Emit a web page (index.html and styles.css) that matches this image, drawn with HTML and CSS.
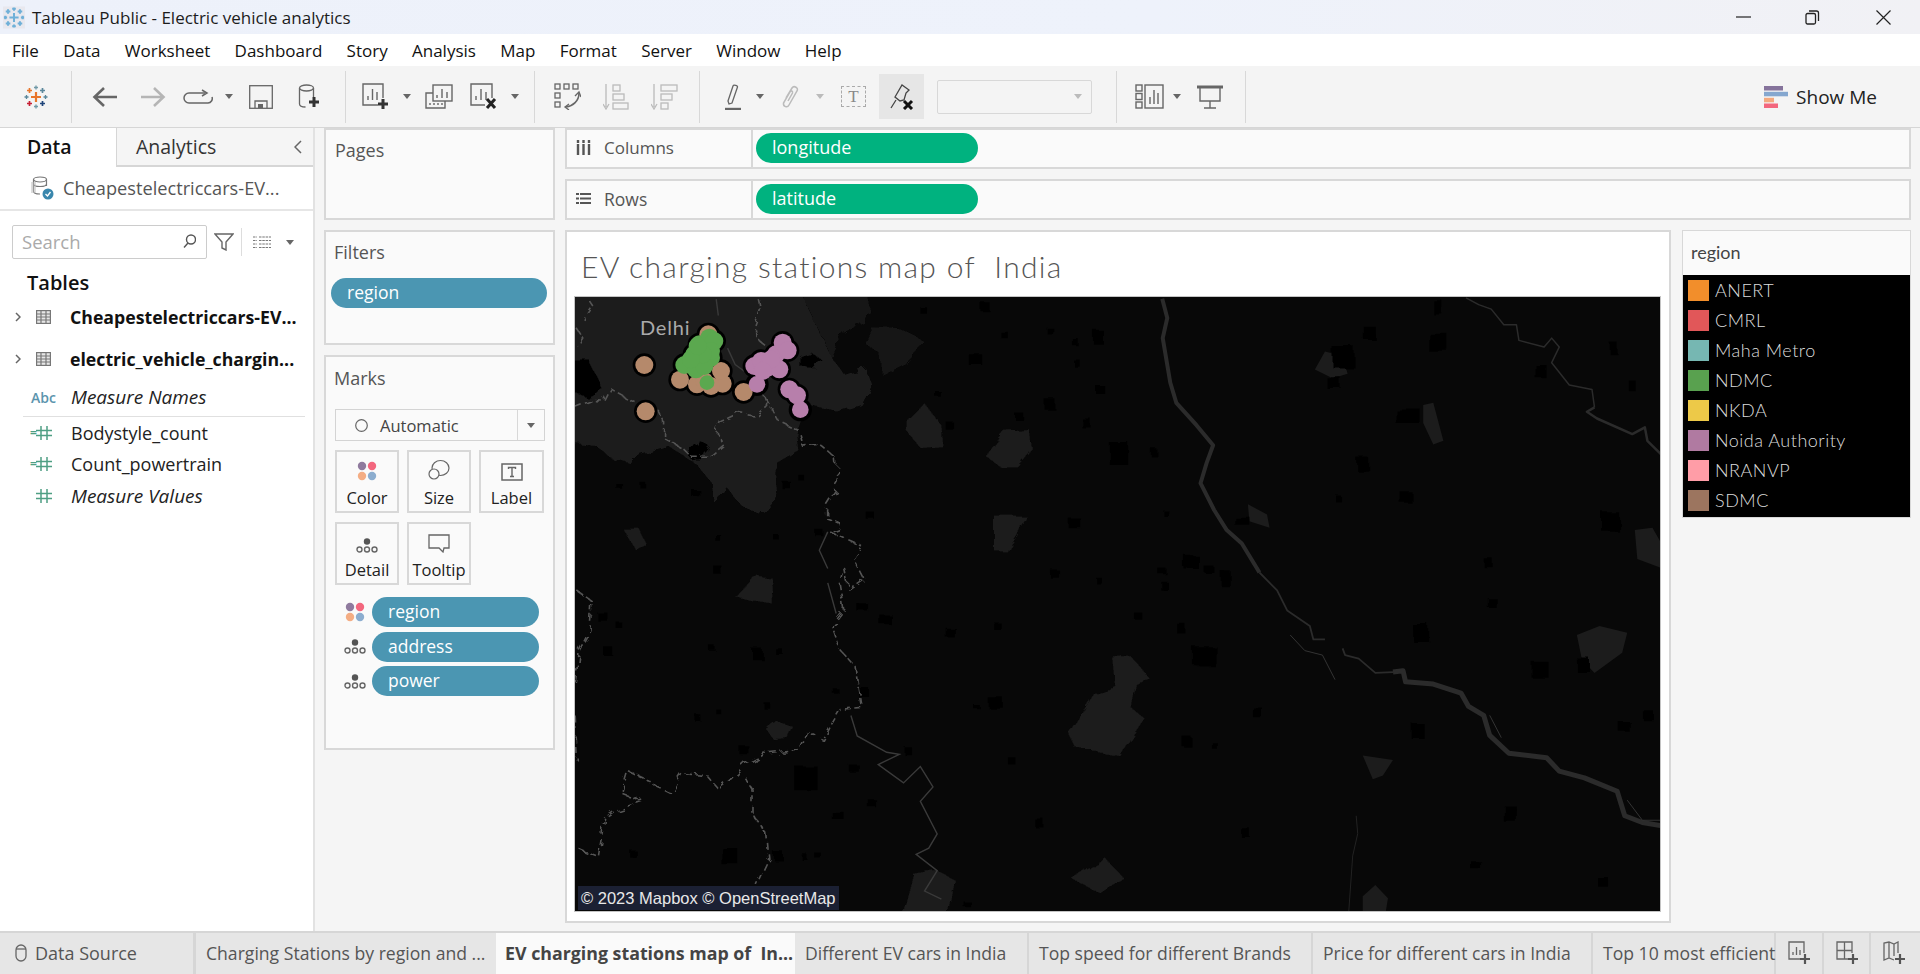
FILE: index.html
```html
<!DOCTYPE html>
<html lang="en">
<head>
<meta charset="utf-8">
<title>Tableau Public - Electric vehicle analytics</title>
<link rel="stylesheet" href="styles.css">
</head>
<body>
<svg class="defs" width="0" height="0" aria-hidden="true">
  <defs>
    <g id="tlogo" fill="none" stroke-width="1.7">
      <path stroke="#e8762b" stroke-width="2.2" d="M12 7v10M7 12h10"/>
      <path stroke="#e8762b" d="M5.5 3v5M3 5.5h5"/>
      <path stroke="#5b879b" d="M18.5 3v5M16 5.5h5"/>
      <path stroke="#c72035" d="M5.5 16v5M3 18.5h5"/>
      <path stroke="#1f447a" d="M18.5 16v5M16 18.5h5"/>
      <path stroke="#7099a6" stroke-width="1.3" d="M12 .5v4M10 2.5h4"/>
      <path stroke="#7099a6" stroke-width="1.3" d="M12 19.5v4M10 21.5h4"/>
      <path stroke="#59879b" stroke-width="1.3" d="M2.5 10v4M.5 12h4"/>
      <path stroke="#59879b" stroke-width="1.3" d="M21.5 10v4M19.5 12h4"/>
    </g>
    <g id="ddots" fill="none" stroke="#666" stroke-width="1.4">
      <circle cx="11" cy="3.5" r="3.2" fill="#555" stroke="none"/>
      <circle cx="3.5" cy="11.5" r="2.5"/><circle cx="11" cy="11.5" r="2.5"/><circle cx="18.5" cy="11.5" r="2.5"/>
    </g>
    <g id="cdots">
      <circle cx="5" cy="5" r="4.2" fill="#8f7a9e"/><circle cx="15" cy="5" r="4.2" fill="#f3677e"/>
      <circle cx="5" cy="15" r="4.2" fill="#f4ad84"/><circle cx="15" cy="15" r="4.2" fill="#8cadcf"/>
    </g>
    <g id="tblg" fill="none" stroke="#777" stroke-width="1.2">
      <rect x=".6" y=".6" width="13.8" height="12.8" fill="#e6e6e6"/>
      <path d="M.6 4h13.8M.6 7h13.8M.6 10h13.8M5 1v12M10 1v12"/>
    </g>
    <g id="hash" fill="none" stroke="#4f9f84" stroke-width="1.5">
      <path d="M5 1v14M11 1v14M0 5.5h16M0 10.5h16"/>
    </g>
    <filter id="wob" x="-2%" y="-2%" width="104%" height="104%"><feTurbulence type="fractalNoise" baseFrequency=".018" numOctaves="2" seed="4"/><feDisplacementMap in="SourceGraphic" scale="22"/></filter>
    <filter id="wig" x="-2%" y="-2%" width="104%" height="104%"><feTurbulence type="fractalNoise" baseFrequency=".035" numOctaves="2" seed="9"/><feDisplacementMap in="SourceGraphic" scale="24"/></filter>
  </defs>
</svg>

<header class="titlebar">
  <svg class="title-logo" width="22" height="23" viewBox="0 0 24 24"><rect width="24" height="24" fill="#e8e8ee"/><g fill="none" stroke="#6fb0d8" stroke-width="1.8"><path stroke-width="2.2" d="M12 7v10M7 12h10M5.5 3v5M3 5.5h5M18.5 3v5M16 5.5h5M5.5 16v5M3 18.5h5M18.5 16v5M16 18.5h5M12 1v3.5M10 2.5h4M12 19.5v3.5M10 21.5h4M2.5 10v4M1 12h3.5M21.5 10v4M19.5 12h3.500"/></g></svg>
  <span class="title-text">Tableau Public - Electric vehicle analytics</span>
  <div class="winctl">
    <svg class="w-min" width="15" height="2" viewBox="0 0 15 2"><path d="M0 1h15" stroke="#222" stroke-width="1.2"/></svg>
    <svg class="w-max" width="15" height="15" viewBox="0 0 15 15" fill="none" stroke="#222" stroke-width="1.3"><rect x="1" y="3.500" width="9.500" height="10.500" rx="1.500"/><path d="M4 1h7.500a2 2 0 0 1 2 2v8"/></svg>
    <svg class="w-close" width="15" height="15" viewBox="0 0 15 15" stroke="#222" stroke-width="1.200"><path d="M.5.5l14 14M14.500.5l-14 14"/></svg>
  </div>
</header>

<nav class="menubar">
  <span>File</span><span>Data</span><span>Worksheet</span><span>Dashboard</span><span>Story</span><span>Analysis</span><span>Map</span><span>Format</span><span>Server</span><span>Window</span><span>Help</span>
</nav>

<div class="toolbar">
  <svg class="t-logo" width="24" height="24" viewBox="0 0 24 24"><use href="#tlogo"/></svg>
  <i class="sep s1"></i>
  <svg class="t-back" width="26" height="22" viewBox="0 0 26 22" fill="none" stroke="#666" stroke-width="2.600"><path d="M25 11H3M12 2l-9.500 9 9.500 9"/></svg>
  <svg class="t-fwd" width="26" height="22" viewBox="0 0 26 22" fill="none" stroke="#b5b5b5" stroke-width="2.600"><path d="M1 11h22M14 2l9.500 9-9.500 9"/></svg>
  <svg class="t-loop" width="30" height="16" viewBox="0 0 30 16" fill="none" stroke="#666" stroke-width="1.500"><path d="M22 4H6a4.500 4.500 0 0 0 0 10h19a4.500 4.500 0 0 0 4-6"/><path d="M19 1l5 3-5 3"/></svg>
  <i class="caret c1"></i>
  <svg class="t-save" width="24" height="24" viewBox="0 0 24 24" fill="none" stroke="#666" stroke-width="1.300"><rect x=".7" y=".7" width="22.600" height="22.600"/><path d="M6 23v-7h12v7"/><rect x="9" y="19" width="5" height="4" fill="#666" stroke="none"/></svg>
  <svg class="t-ds" width="22" height="25" viewBox="0 0 22 25" fill="none" stroke="#666" stroke-width="1.300"><ellipse cx="8.500" cy="4" rx="7" ry="3"/><path d="M1.500 4v16c0 2 3 3 6 3M15.500 4v9"/><path stroke="#333" stroke-width="3" d="M16 13v10M11 18h10"/></svg>
  <i class="sep s2"></i>
  <svg class="t-new" width="27" height="27" viewBox="0 0 27 27" fill="none" stroke="#666" stroke-width="1.400"><path d="M16 22H1V1h20v14"/><path d="M6 17v-4M10.500 17V6M15 17V9"/><path stroke="#333" stroke-width="3" d="M21 16v10M16 21h10"/></svg>
  <i class="caret c2"></i>
  <svg class="t-dup" width="28" height="25" viewBox="0 0 28 25" fill="none" stroke="#666" stroke-width="1.400"><rect x="8" y="1" width="19" height="16"/><path d="M12 14v-3M17 14V5M22 14V8"/><path d="M8 9H1v15h19v-7"/><path d="M5 21v-2M9 21v-2M13 21v-2M17 21v-2"/></svg>
  <svg class="t-clear" width="27" height="27" viewBox="0 0 27 27" fill="none" stroke="#666" stroke-width="1.400"><path d="M15 22H1V1h21v14"/><path d="M6 17v-4M11 17V6M16 17V9"/><path stroke="#222" stroke-width="3" d="M17 16l8 9M25 16l-8 9"/></svg>
  <i class="caret c3"></i>
  <i class="sep s3"></i>
  <svg class="t-swap" width="27" height="27" viewBox="0 0 27 27" fill="none" stroke="#666" stroke-width="1.300"><rect x="1" y="1" width="5" height="5"/><rect x="10" y="1" width="5" height="5"/><rect x="19" y="1" width="5" height="5"/><rect x="1" y="10" width="5" height="5"/><rect x="1" y="19" width="5" height="5"/><path stroke-width="1.600" d="M25 10c0 8-6 13-13 14"/><path d="M21 13l4-4 2 5M15 21l-4 3 4 3"/></svg>
  <svg class="t-sorta" width="26" height="27" viewBox="0 0 26 27" fill="none" stroke="#bbb" stroke-width="1.300"><path d="M3 1v23M0 21l3 5 3-5"/><rect x="10" y="2" width="7" height="6"/><rect x="10" y="11" width="11" height="6"/><rect x="10" y="20" width="15" height="6"/></svg>
  <svg class="t-sortd" width="27" height="27" viewBox="0 0 27 27" fill="none" stroke="#bbb" stroke-width="1.300"><path d="M3 1v23M0 21l3 5 3-5"/><rect x="10" y="2" width="16" height="6"/><rect x="10" y="11" width="11" height="6"/><rect x="10" y="20" width="7" height="6"/></svg>
  <i class="sep s4"></i>
  <svg class="t-hl" width="16" height="26" viewBox="0 0 16 26" fill="none" stroke="#666" stroke-width="1.300"><path d="M3 17L8 2c.5-1.500 5-.5 4.500 1L7 19l-3 1z"/><path stroke-width="2.400" d="M0 25h16"/></svg>
  <i class="caret c5"></i>
  <svg class="t-clip" width="18" height="26" viewBox="0 0 18 26" fill="none" stroke="#bbb" stroke-width="1.500"><path d="M4 14L10 4c2-3 7 0 5 3L7 21c-1.500 3-6 2-5.500-2L8 8c1-2 3-1 2.500 1L6 17"/></svg>
  <i class="caret light c6"></i>
  <span class="t-text">T</span>
  <span class="pinbtn"><svg width="25" height="27" viewBox="0 0 25 27" fill="none" stroke="#444" stroke-width="1.300"><path d="M6 14L13 2l7 5-3 3-2 7-4 1-5-4zM7 17L2 25"/><path stroke="#111" stroke-width="3" d="M15 18l8 8M23 18l-8 8"/></svg></span>
  <span class="combo"><i class="caret light"></i></span>
  <i class="sep s5"></i>
  <svg class="t-lab" width="29" height="25" viewBox="0 0 29 25" fill="none" stroke="#666" stroke-width="1.400"><rect x="1" y="1" width="6" height="6"/><rect x="1" y="9.500" width="6" height="6"/><rect x="1" y="18" width="6" height="6"/><rect x="10" y="1" width="18" height="23"/><path d="M15 20v-7M19 20V6M23 20V9"/></svg>
  <i class="caret c7"></i>
  <svg class="t-pres" width="26" height="25" viewBox="0 0 26 25" fill="none" stroke="#666" stroke-width="1.400"><path stroke-width="3" d="M0 3h26"/><path d="M3 4v13h20V4M13 17v7M7 24h12"/></svg>
  <i class="sep s6"></i>
  <div class="showme">
    <svg width="24" height="22" viewBox="0 0 24 22"><rect width="19" height="4.500" fill="#85739b"/><rect y="5.800" width="24" height="4.500" fill="#85a7cf"/><rect y="11.800" width="10" height="4.500" fill="#f4a97f"/><rect y="17.500" width="14" height="4.500" fill="#f3677e"/></svg>
    <span>Show Me</span>
  </div>
</div>

<main class="main">
  <aside class="leftpane">
    <div class="ltabs">
      <span class="ltab active">Data</span>
      <span class="ltab">Analytics<svg class="collapse" width="8" height="14" viewBox="0 0 8 14" fill="none" stroke="#666" stroke-width="1.500"><path d="M7 1L1 7l6 6"/></svg></span>
    </div>
    <div class="dsrow">
      <svg width="24" height="24" viewBox="0 0 24 24" fill="none" stroke="#777" stroke-width="1.200"><ellipse cx="10" cy="3.500" rx="6.500" ry="2.500"/><path d="M3.500 3.500v12c0 1.500 3 2.500 6.500 2.500M16.500 3.500V10M3.500 8c0 1.500 3 2.500 6.500 2.500s6.500-1 6.500-2.500"/><rect x="1" y="6" width="5" height="11" fill="#bbb" stroke="none" opacity=".5"/><circle cx="18" cy="18" r="5.500" fill="#3a87ad" stroke="none"/><path stroke="#fff" stroke-width="1.300" d="M15.500 18l2 2 3-4"/></svg>
      <span>Cheapestelectriccars-EV...</span>
    </div>
    <div class="searchrow">
      <div class="searchbox"><span>Search</span><svg width="13" height="14" viewBox="0 0 13 14" fill="none" stroke="#555" stroke-width="1.400"><circle cx="8" cy="5.500" r="4.500"/><path d="M5 9l-4 4.500"/></svg></div>
      <svg class="s-filter" width="20" height="18" viewBox="0 0 20 18" fill="none" stroke="#666" stroke-width="1.400"><path d="M1 1h18l-7 8v8l-4-2V9z"/></svg>
      <i class="vsep"></i>
      <svg class="s-list" width="18" height="13" viewBox="0 0 18 13" stroke="#777" stroke-width="1.100"><path d="M0 1h4M6 1h12M0 4.500h4M6 4.500h12M0 8h4M6 8h12M0 11.500h4M6 11.500h12" stroke-dasharray="2.500 .8"/></svg>
      <i class="caret s-caret"></i>
    </div>
    <div class="tables-h">Tables</div>
    <div class="trow first"><svg class="chev" width="6" height="10" viewBox="0 0 6 10" fill="none" stroke="#666" stroke-width="1.500"><path d="M1 1l4 4-4 4"/></svg><svg width="15" height="14" viewBox="0 0 15 14"><use href="#tblg"/></svg><b>Cheapestelectriccars-EV...</b></div>
    <div class="trow"><svg class="chev" width="6" height="10" viewBox="0 0 6 10" fill="none" stroke="#666" stroke-width="1.500"><path d="M1 1l4 4-4 4"/></svg><svg width="15" height="14" viewBox="0 0 15 14"><use href="#tblg"/></svg><b>electric_vehicle_chargin...</b></div>
    <div class="frow names"><span class="abc">Abc</span><em>Measure Names</em></div>
    <div class="frow f1"><span class="eq">=</span><svg width="16" height="16" viewBox="0 0 16 16"><use href="#hash"/></svg><span class="ftext">Bodystyle_count</span></div>
    <div class="frow f2"><span class="eq">=</span><svg width="16" height="16" viewBox="0 0 16 16"><use href="#hash"/></svg><span class="ftext">Count_powertrain</span></div>
    <div class="frow f2"><span class="eq"></span><svg width="16" height="16" viewBox="0 0 16 16"><use href="#hash"/></svg><em class="ftext">Measure Values</em></div>
  </aside>

  <section class="midcol">
    <div class="card pages"><div class="card-h">Pages</div></div>
    <div class="card filters"><div class="card-h">Filters</div><div class="pill wide">region</div></div>
    <div class="card marks">
      <div class="card-h">Marks</div>
      <div class="marksel">
        <svg width="13" height="13" viewBox="0 0 13 13" fill="none" stroke="#666" stroke-width="1.200"><circle cx="6.500" cy="6.500" r="5.800"/></svg>
        <span>Automatic</span>
        <b class="marksel-btn"><i class="caret"></i></b>
      </div>
      <div class="mbtns">
        <div class="mbtn"><svg width="20" height="20" viewBox="0 0 20 20"><use href="#cdots"/></svg><span>Color</span></div>
        <div class="mbtn"><svg width="22" height="22" viewBox="0 0 22 22" fill="none" stroke="#666" stroke-width="1.200"><ellipse cx="12.500" cy="9" rx="8.500" ry="7.500"/><circle cx="6" cy="15" r="5" fill="#fafafa"/></svg><span>Size</span></div>
        <div class="mbtn lab"><svg width="22" height="18" viewBox="0 0 22 18" fill="none" stroke="#666" stroke-width="1.500"><rect x="1" y="1" width="20" height="16"/><path stroke-width="1.400" d="M7.500 6V4.500h7V6M11 4.500v9M9 13.500h4"/></svg><span>Label</span></div>
        <div class="mbtn"><svg width="22" height="15" viewBox="0 0 22 15"><use href="#ddots"/></svg><span>Detail</span></div>
        <div class="mbtn"><svg width="22" height="19" viewBox="0 0 22 19" fill="none" stroke="#666" stroke-width="1.300"><path d="M1 1h20v13h-5l-1 4-4-4H1z"/></svg><span>Tooltip</span></div>
      </div>
      <div class="mpills">
        <div class="mpill"><svg width="20" height="20" viewBox="0 0 20 20"><use href="#cdots"/></svg><div class="pill">region</div></div>
        <div class="mpill"><svg width="22" height="15" viewBox="0 0 22 15"><use href="#ddots"/></svg><div class="pill">address</div></div>
        <div class="mpill"><svg width="22" height="15" viewBox="0 0 22 15"><use href="#ddots"/></svg><div class="pill">power</div></div>
      </div>
    </div>
  </section>

  <section class="rightcol">
    <div class="shelf">
      <div class="shelf-l"><svg width="15" height="15" viewBox="0 0 15 15" stroke="#555" stroke-width="2.400" stroke-dasharray="3 1 11"><path d="M2 0v15M7.500 0v15M13 0v15"/></svg><span class="sh-col">Columns</span></div>
      <div class="shelf-r"><div class="pill green">longitude</div></div>
    </div>
    <div class="shelf">
      <div class="shelf-l"><svg width="15" height="13" viewBox="0 0 15 13" stroke="#555" stroke-width="2.200" stroke-dasharray="3 1 11"><path d="M0 2h15M0 6.500h15M0 11h15"/></svg><span>Rows</span></div>
      <div class="shelf-r"><div class="pill green">latitude</div></div>
    </div>
    <div class="viewrow">
      <div class="viewcard">
        <h1 class="vtitle">EV charging stations map of &nbsp;India</h1>
        <div class="map">
          <svg class="mapsvg" width="1086" height="615" viewBox="0 0 1086 615">
            <rect width="1086" height="615" fill="#080808"/>
            <g transform="matrix(.4209 0 0 .4082 -4 -6)">
              <g filter="url(#wig)">
                <path fill="#1c1c1c" d="M-20 -10H540L620 165 650 205 700 190 716 230 690 280 630 295 560 280 535 350 540 390 490 420 485 500 450 550 400 520 370 480 340 520 335 470 295 420 230 380 160 400 140 420 90 405 60 380 -20 372Z"/>
                <path fill="#141414" d="M540 -10H700L712 55 640 115 620 165Z"/>
                <path fill="#1f1f1f" d="M-20 265 60 270 40 300 -20 300ZM295 420 400 360 480 400 490 500 450 550 400 520 370 480 340 520 335 470Z"/>
                <path fill="#050505" d="M-20 165 40 165 75 240 40 260 -20 240ZM545 160 570 150 598 170 580 190 545 185ZM275 400 305 365 328 380 305 410 285 412Z"/>
              </g>
              <path fill="#141414" filter="url(#wob)" d="M700 130 712 90 770 85 835 120 790 175 740 205 735 155Z"/>
              <path fill="#1a1a1a" filter="url(#wob)" d="M800 320 840 275 880 330 885 380 830 385 800 345ZM985 405 1030 345 1090 340 1095 385 1060 430 1020 430ZM1005 550H1080L1060 600 1035 638H1005ZM120 580H160L180 620 150 630ZM392 750 440 695 475 700 480 768 430 760ZM465 1075 490 1055 525 1065 515 1095 480 1098ZM1180 1080 1240 985 1295 970 1288 900 1330 895 1375 950 1340 960 1330 1020 1365 1050 1305 1140 1200 1120ZM1190 1440 1265 1385 1315 1440 1260 1478ZM815 1430 870 1420 910 1440 895 1530H790Z"/>
              <path fill="#020202" filter="url(#wob)" d="M975 30h22v22h-22zM830 40h16v16h-16zM1020 100h18v16h-18zM1130 90h16v14h-16zM1240 95h24v34h-24zM1190 115h14v18h-14zM945 155h32v26h-32zM1055 300h22v16h-22zM1125 265h26v26h-26zM1215 315h22v22h-22zM1280 370h44v56h-44zM1375 385h16v18h-16zM1195 170h16v18h-16zM1245 230h22v20h-22zM890 320h18v20h-18zM860 240h14v14h-14zM540 450h14v14h-14zM505 470h20v18h-20zM285 485h20v18h-20zM105 468h14v14h-14zM160 465h14v14h-14zM345 600h14v14h-14zM480 595h14v14h-14zM580 585h20v16h-20zM700 540h20v18h-20zM1180 555h30v24h-30zM1405 535h12v14h-12zM1455 650h34v30h-34zM1140 685h22v20h-22zM1395 680h20v14h-20zM1505 675h24v16h-24zM1400 710h16v22h-16zM1250 705h14v14h-14zM730 790h28v24h-28zM680 765h26v20h-26zM340 675h20v20h-20zM108 812h16v16h-16zM65 790h24v20h-24zM890 825h22v24h-22zM1003 812h18v16h-18zM1440 815h20v24h-20zM1335 785h20v18h-20zM76 870h22v22h-22zM430 878h26v24h-26zM330 870h16v14h-16zM485 875h18v14h-18zM1480 875h50v44h-50zM990 995h36v26h-36zM955 1012h14v10h-14zM455 1005h16v16h-16zM298 1042h14v16h-14zM345 1025h12v12h-12zM617 968h14v14h-14zM682 970h24v22h-24zM400 1115h24v20h-24zM790 1115h18v20h-18zM1038 1142h18v18h-18zM1452 1090h20v24h-20zM1525 1108h12v16h-12zM530 1165h56v58h-56zM660 1160h24v18h-24zM705 1245h20v20h-20zM622 1278h28v18h-28zM1103 1295h22v22h-22zM355 1362h40v40h-40zM138 1368h16v18h-16zM548 1380h14v14h-14zM580 1378h16v12h-16zM482 1375h24v20h-24zM935 1498h18v14h-18z"/>
              <g fill="none" stroke="#555" stroke-width="1.600" stroke-dasharray="7 3.500" stroke-linejoin="round" filter="url(#wig)">
                <path vector-effect="non-scaling-stroke" d="M445 20 452 50 438 90 440 115 470 140"/>
                <path vector-effect="non-scaling-stroke" d="M40 20 50 35 28 68M12 90 28 115 15 135"/>
                <path vector-effect="non-scaling-stroke" d="M10 285 50 268 80 270 95 240 130 260 165 275 205 290 220 320 220 360 265 385 285 405 335 405 365 380 345 345 355 320 400 298 440 305 465 280 455 250 490 315 540 340 550 380 590 375 630 410 635 470 605 520 605 555 640 570 640 580 615 590 690 625 670 655 695 705 660 730 650 680 640 720 650 780 620 820 640 880 675 920 685 990 690 1020 640 1025 620 1060 600 1100 560 1080 540 1125 460 1135 415 1160 375 1200 350 1220 320 1185 265 1180 235 1230 205 1215 175 1195 135 1175 120 1230 170 1250 110 1270 80 1290 65 1385 15 1365"/>
                <path vector-effect="non-scaling-stroke" d="M410 1190 430 1220 430 1280 465 1330 470 1390 440 1455"/>
                <path vector-effect="non-scaling-stroke" d="M15 735 50 760 45 830 20 880 10 960M10 1040 15 1150"/>
              </g>
              <g fill="none" stroke="#3a3a3a" stroke-width="1.400">
                <path vector-effect="non-scaling-stroke" d="M345 20 350 60M372 140 390 180 430 210"/>
                <path vector-effect="non-scaling-stroke" d="M610 590 590 635 610 680M610 715 630 790M665 1040 680 1090 750 1130 780 1135 730 1160 790 1205 830 1165 860 1215 830 1250 870 1330 850 1365 820 1380 870 1420 840 1470 880 1490"/>
              </g>
            </g>
            <g transform="matrix(.3333 0 0 .3333 -4 -6)">
              <g fill="#000">
                <circle cx="220" cy="222" r="35"/><circle cx="224" cy="361" r="35"/><circle cx="327" cy="266" r="35"/><circle cx="412" cy="130" r="35"/><circle cx="518" cy="303" r="35"/><circle cx="378" cy="280" r="35"/><circle cx="455" cy="278" r="35"/><circle cx="450" cy="240" r="35"/><circle cx="420" cy="285" r="35"/>
                <circle cx="340" cy="222" r="35"/><circle cx="370" cy="190" r="35"/><circle cx="385" cy="160" r="35"/><circle cx="430" cy="150" r="35"/><circle cx="420" cy="200" r="35"/><circle cx="375" cy="235" r="35"/>
                <circle cx="558" cy="280" r="35"/><circle cx="550" cy="225" r="35"/><circle cx="570" cy="210" r="35"/><circle cx="625" cy="235" r="35"/><circle cx="615" cy="190" r="35"/><circle cx="635" cy="155" r="35"/><circle cx="650" cy="178" r="35"/><circle cx="655" cy="295" r="35"/><circle cx="678" cy="313" r="35"/><circle cx="688" cy="356" r="35"/>
              </g>
              <g fill="#b5896b">
                <circle cx="220" cy="222" r="27"/><circle cx="224" cy="361" r="27"/><circle cx="327" cy="266" r="27"/><circle cx="412" cy="130" r="27"/><circle cx="518" cy="303" r="27"/><circle cx="378" cy="280" r="27"/><circle cx="455" cy="278" r="27"/><circle cx="450" cy="240" r="27"/><circle cx="420" cy="285" r="27"/><circle cx="400" cy="270" r="27"/>
              </g>
              <g fill="#b77fab">
                <circle cx="558" cy="280" r="25"/><circle cx="550" cy="225" r="27"/><circle cx="570" cy="210" r="27"/><circle cx="590" cy="230" r="27"/><circle cx="625" cy="235" r="27"/><circle cx="615" cy="190" r="27"/><circle cx="635" cy="155" r="27"/><circle cx="650" cy="178" r="27"/><circle cx="600" cy="205" r="27"/><circle cx="575" cy="240" r="27"/><circle cx="655" cy="295" r="27"/><circle cx="678" cy="313" r="27"/><circle cx="688" cy="356" r="25"/>
              </g>
              <g fill="#5ba84f">
                <circle cx="340" cy="222" r="27"/><circle cx="370" cy="190" r="27"/><circle cx="385" cy="160" r="27"/><circle cx="415" cy="140" r="27"/><circle cx="430" cy="150" r="27"/><circle cx="385" cy="215" r="27"/><circle cx="420" cy="200" r="27"/><circle cx="375" cy="235" r="27"/><circle cx="400" cy="225" r="27"/><circle cx="420" cy="180" r="27"/><circle cx="395" cy="190" r="27"/><circle cx="360" cy="205" r="27"/><circle cx="380" cy="165" r="27"/><circle cx="408" cy="275" r="22"/>
              </g>
            </g>
            <g transform="matrix(.5038 0 0 .4464 556 -66)">
              <path fill="#1c1c1c" d="M365 310 385 270 420 280 430 320 400 330ZM580 390 600 385 620 470 600 478 580 430ZM232 612 270 635 275 665 235 650ZM1000 670 1035 665 1053 700 1053 755 1005 735ZM885 905 930 885 985 900 975 945 920 990 895 960ZM460 1175 520 1185 500 1220 480 1228ZM460 1490 485 1465 510 1495 505 1530H460Z"/>
              <path fill="#020202" filter="url(#wob)" d="M600 155h18v32h-18zM460 212h24v30h-24zM590 230h40v38h-40zM400 260h44v46h-44zM390 330h28v24h-28zM525 400h50v30h-50zM445 505h24v30h-24zM535 585h24v26h-24zM105 725h28v30h-28zM180 762h18v36h-18zM560 885h34v38h-34zM130 935h44v40h-44zM795 965h34v36h-34zM555 1100h24v36h-24zM100 1130h18v24h-18zM240 1065h18v22h-18zM738 1285h24v36h-24zM220 1340h18v20h-18zM675 1412h20v18h-20zM925 1447h22v20h-22zM935 630h34v44h-34zM700 733h18v20h-18zM710 825h18v22h-18zM970 1100h22v24h-22zM1018 1078h22v20h-22zM405 590h10v16h-10zM950 250h16v26h-16zM805 300h20v30h-20zM988 335h14v24h-14zM205 640h30v18h-30zM885 960h28v30h-28z"/>
              <g fill="none" stroke="#2b2b2b" stroke-linejoin="round">
                <path stroke-width="4" vector-effect="non-scaling-stroke" d="M62 152 72 195 63 240 78 340 90 385 130 435 163 480 150 520 138 565 165 625 190 670 220 700 255 765"/>
                <path stroke-width="1.800" vector-effect="non-scaling-stroke" d="M255 765 290 805 310 850 355 885 362 915 385 915M420 935 425 950 452 958 485 990 520 988"/>
                <path stroke-width="5" vector-effect="non-scaling-stroke" d="M520 988 540 985 545 1010 600 1015 655 1035 670 1065 700 1085 712 1130 750 1170 825 1180 850 1210 900 1225 965 1255 980 1310 1015 1325 1052 1332"/>
                <path stroke-width="1.500" vector-effect="non-scaling-stroke" d="M665 150 690 165 715 175 740 210 765 210 770 245 820 260 835 240 850 260 835 295 870 345 915 355 920 395"/><path stroke-width="2.500" vector-effect="non-scaling-stroke" d="M920 395 905 405 925 420 995 455 1020 440 1025 470 1052 500"/>
                <path stroke-width="1" stroke="#333" vector-effect="non-scaling-stroke" d="M316 905 345 940 380 950 405 1005M712 1085 735 1135M985 1275 1015 1320 1052 1320"/>
                <path stroke-width="1" stroke="#222" vector-effect="non-scaling-stroke" d="M447 1310 450 1350 440 1400 432 1528"/>
              </g>
            </g>
          </svg>
          <span class="delhi">Delhi</span>
          <span class="attrib">© 2023 Mapbox © OpenStreetMap</span>
        </div>
      </div>
      <div class="legend">
        <div class="legend-h">region</div>
        <ul class="legend-list">
          <li><i class="sw c-anert"></i>ANERT</li>
          <li><i class="sw c-cmrl"></i>CMRL</li>
          <li><i class="sw c-maha"></i>Maha Metro</li>
          <li><i class="sw c-ndmc"></i>NDMC</li>
          <li><i class="sw c-nkda"></i>NKDA</li>
          <li><i class="sw c-noida"></i>Noida Authority</li>
          <li><i class="sw c-nranvp"></i>NRANVP</li>
          <li><i class="sw c-sdmc"></i>SDMC</li>
        </ul>
      </div>
    </div>
  </section>
</main>

<footer class="tabbar">
  <div class="tab ds"><svg width="12" height="18" viewBox="0 0 12 18" fill="none" stroke="#666" stroke-width="1.300"><rect x="1" y="1" width="10" height="16" rx="5"/><path d="M1 5h10"/></svg><span>Data Source</span></div>
  <div class="tab t1">Charging Stations by region and ...</div>
  <div class="tab t2 active">EV charging stations map of &nbsp;In...</div>
  <div class="tab t3">Different EV cars in India</div>
  <div class="tab t4">Top speed for different Brands</div>
  <div class="tab t5">Price for different cars in India</div>
  <div class="tab t6">Top 10 most efficient</div>
  <div class="tab ticon"><svg width="24" height="24" viewBox="0 0 24 24" fill="none" stroke="#666" stroke-width="1.300"><path d="M12 18H1V1h15v11M5 14v-3M8.500 14V6M12 14V9"/><path stroke="#555" stroke-width="2.200" d="M17 13v10M12 18h10"/></svg></div>
  <div class="tab ticon"><svg width="24" height="24" viewBox="0 0 24 24" fill="none" stroke="#666" stroke-width="1.300"><path d="M12 18H1V1h15v11M8.500 1v17M1 9.500h15"/><path stroke="#555" stroke-width="2.200" d="M17 13v10M12 18h10"/></svg></div>
  <div class="tab ticon"><svg width="24" height="24" viewBox="0 0 24 24" fill="none" stroke="#666" stroke-width="1.300"><path d="M11 19l-5-2-5 2V2l5-1 5 2 4-2v11M6 1v16M11 3v12"/><path stroke="#555" stroke-width="2.200" d="M17 13v10M12 18h10"/></svg></div>
</footer>
</body>
</html>
```

FILE: styles.css
```css
* { box-sizing: border-box; }
html, body { margin: 0; padding: 0; }
html { height: 974px; overflow: hidden; }
body {
  width: 1920px;
  height: 974px;
  overflow: hidden;
  display: flex;
  flex-direction: column;
  font-family: "Open Sans", "Noto Sans", sans-serif;
  color: #222;
  background: #f5f5f5;
}
.defs { position: absolute; }
svg { display: block; flex: none; }
i { display: block; font-style: normal; }

.titlebar {
  height: 34px;
  flex: none;
  display: flex;
  align-items: center;
  padding-left: 3px;
  background: linear-gradient(90deg, #edf1fa 0%, #eef2fb 60%, #f1f1f5 100%);
}
.title-text { margin-left: 7px; font-size: 17px; color: #1c1c1c; }
.winctl { margin-left: auto; display: flex; align-items: center; margin-right: 29px; }
.w-max { margin-left: 54px; }
.w-close { margin-left: 56px; }

.menubar {
  height: 32px;
  flex: none;
  background: #fff;
  display: flex;
  align-items: center;
  padding-left: 12px;
  gap: 24.3px;
  font-size: 17px;
  color: #111;
}

.toolbar {
  height: 61px;
  flex: none;
  background: #f4f4f4;
  display: flex;
  align-items: center;
  padding-left: 24px;
  padding-right: 43px;
}
.sep { width: 1px; height: 52px; background: #d8d8d8; }
.caret { width: 0; height: 0; border-left: 4.500px solid transparent; border-right: 4.500px solid transparent; border-top: 5.500px solid #666; }
.caret.light { border-top-color: #bbb; }
.s1 { margin-left: 23px; }
.t-back { margin-left: 20px; }
.t-fwd { margin-left: 22px; }
.t-loop { margin-left: 17px; }
.c1 { margin-left: 12px; }
.t-save { margin-left: 16px; }
.t-ds { margin-left: 25px; }
.s2 { margin-left: 25px; }
.t-new { margin-left: 16px; }
.c2 { margin-left: 14px; }
.t-dup { margin-left: 14px; }
.t-clear { margin-left: 17px; }
.c3 { margin-left: 14px; }
.s3 { margin-left: 15px; }
.t-swap { margin-left: 19px; }
.t-sorta { margin-left: 22px; }
.t-sortd { margin-left: 22px; }
.s4 { margin-left: 21px; }
.t-hl { margin-left: 25px; }
.c5 { margin-left: 15px; }
.t-clip { margin-left: 18px; }
.c6 { margin-left: 16px; }
.t-text {
  margin-left: 17px;
  width: 25px;
  height: 21px;
  border: 1px dashed #aaa;
  font-family: "Liberation Serif", serif;
  font-size: 17px;
  line-height: 19px;
  text-align: center;
  color: #888;
}
.pinbtn {
  margin-left: 13px;
  width: 45px;
  height: 45px;
  background: #e6e6e6;
  display: flex;
  align-items: center;
  justify-content: center;
}
.combo {
  margin-left: 13px;
  width: 155px;
  height: 34px;
  border: 1px solid #d8d8d8;
  border-radius: 2px;
  display: flex;
  align-items: center;
  justify-content: flex-end;
  padding-right: 9px;
}
.s5 { margin-left: 24px; }
.t-lab { margin-left: 18px; }
.c7 { margin-left: 9px; }
.t-pres { margin-left: 16px; }
.s6 { margin-left: 22px; }
.showme { margin-left: auto; display: flex; align-items: center; gap: 8px; font-size: 19px; line-height: 22px; color: #222; }

.main { flex: 1; display: flex; min-height: 0; border-top: 1px solid #d6d6d6; }
.leftpane {
  width: 315px;
  flex: none;
  background: #fff;
  border-right: 2px solid #e2e2e2;
  display: flex;
  flex-direction: column;
}
.ltabs { height: 39px; display: flex; flex: none; }
.ltab { font-size: 19.500px; line-height: 36px; color: #333; display: flex; align-items: center; }
.ltab.active { width: 116px; padding: 0 0 2px 27px; font-weight: 600; color: #111; background: #fff; }
.ltab:not(.active) {
  flex: 1;
  padding-left: 19px;
  background: #f5f5f5;
  border-left: 1px solid #d6d6d6;
  border-bottom: 2px solid #d6d6d6;
}
.collapse { margin-left: auto; margin-right: 11px; }
.dsrow {
  height: 44px;
  flex: none;
  display: flex;
  align-items: center;
  gap: 9px;
  padding-left: 30px;
  font-size: 18.200px;
  color: #555;
  border-bottom: 2px solid #e6e6e6;
}
.searchrow { display: flex; align-items: center; padding: 14px 0 0 12px; flex: none; }
.searchbox {
  width: 195px;
  height: 34px;
  border: 1px solid #ccc;
  border-radius: 2px;
  display: flex;
  align-items: center;
  justify-content: space-between;
  padding: 0 10px 2px 9px;
  font-size: 18.500px;
  color: #aaa;
}
.s-filter { margin-left: 7px; }
.vsep { width: 1px; height: 28px; background: #ddd; margin-left: 7px; }
.s-list { margin-left: 11px; }
.s-caret { margin-left: 15px; }
.tables-h { font-size: 20px; font-weight: 600; color: #111; padding-left: 27px; line-height: 28px; margin-top: 10px; flex: none; }
.trow { display: flex; align-items: center; height: 42px; flex: none; font-size: 17.700px; color: #111; }
.trow.first { margin-top: -1px; }
.trow b { margin-left: 19px; font-weight: 700; white-space: nowrap; }
.chev { margin-left: 15px; margin-right: 15px; }
.frow { display: flex; align-items: center; flex: none; font-size: 18px; color: #222; margin-left: 23px; }
.frow em { font-size: 19px; }
.names { height: 39px; width: 282px; border-bottom: 1px solid #e0e0e0; margin-top: -2px; }
.abc { width: 48px; padding-left: 8px; font-size: 14px; font-weight: 600; color: #5b94ad; }
.f1 { height: 31px; }
.f2 { height: 32px; }
.eq { width: 6px; margin-left: 7px; font-size: 12px; font-weight: 700; color: #4f9f84; line-height: 14px; }
.ftext { margin-left: 19px; }

.midcol { width: 231px; flex: none; margin-left: 9px; display: flex; flex-direction: column; gap: 10px; }
.card { border: 2px solid #d8d8d8; background: #fafafa; padding: 0 9px; }
.card-h { font-size: 18px; color: #555; line-height: 24px; padding-top: 8px; }
.pages { height: 92px; }
.filters { height: 115px; padding: 0 6px 0 5px; }
.filters .card-h { padding-left: 3px; }
.marks { height: 395px; }
.marks .card-h { padding-top: 9px; margin-left: -1px; }
.pill {
  background: #4b96b2;
  color: #fff;
  font-size: 17.500px;
  height: 30px;
  line-height: 29px;
  border-radius: 15px;
  padding-left: 16px;
  flex: 1;
}
.pill.wide { margin-top: 14px; padding-left: 16px; }
.marksel {
  margin-top: 19px;
  height: 32px;
  width: 210px;
  border: 1px solid #d4d4d4;
  display: flex;
  align-items: center;
  font-size: 16.500px;
  color: #444;
  padding-left: 19px;
  gap: 12px;
}
.marksel-btn { margin-left: auto; width: 27px; height: 100%; border-left: 1px solid #d8d8d8; display: flex; align-items: center; justify-content: center; }
.mbtns { display: grid; grid-template-columns: 64px 64px 65px; column-gap: 8px; row-gap: 9px; margin-top: 9px; }
.mbtn {
  height: 63px;
  border: 2px solid #d8d8d8;
  display: flex;
  flex-direction: column;
  align-items: center;
  justify-content: flex-end;
  font-size: 16.500px;
  color: #222;
  padding-bottom: 1px;
  gap: 5px;
  line-height: 24px;
}
.mpills { display: flex; flex-direction: column; gap: 4.500px; margin-top: 12px; padding-left: 9px; width: 204px; }
.mpill { display: flex; align-items: center; gap: 5px; }
.mpill svg:first-child { width: 22px; }
.mpill .pill { margin-left: 1px; }

.rightcol { flex: 1; margin-left: 10px; margin-right: 9px; display: flex; flex-direction: column; gap: 10px; min-width: 0; }
.shelf { height: 41px; flex: none; display: flex; border: 2px solid #d8d8d8; background: #fafafa; }
.shelf-l { width: 186px; display: flex; align-items: center; gap: 13px; padding: 0 0 2px 9px; font-size: 17.500px; color: #555; border-right: 2px solid #d8d8d8; }
.sh-col { font-size: 17px; }
.shelf-r { flex: 1; display: flex; align-items: center; padding: 0 0 2px 3px; }
.pill.green { flex: none; width: 222px; background: #00b27f; font-size: 18px; }
.viewrow { flex: 1; display: flex; min-height: 0; gap: 11px; }
.viewcard { width: 1106px; border: 2px solid #d8d8d8; background: #fff; padding: 0 9px 9px 7px; display: flex; flex-direction: column; height: 693px; }
.vtitle { margin: 0; height: 64px; flex: none; font-family: Lato, "Open Sans", sans-serif; font-weight: 300; font-size: 30px; line-height: 68px; letter-spacing: 1.3px; color: #555; padding-left: 7px; white-space: nowrap; }
.map { position: relative; width: 1087px; height: 616px; border: 1px solid #c4c4c4; overflow: hidden; background: #080808; }
.delhi { position: absolute; left: 65px; top: 18px; font-family: Lato, sans-serif; font-size: 20px; letter-spacing: .8px; color: #aaa; }
.attrib { position: absolute; left: 3px; bottom: 1px; height: 24px; padding: 0 3px; line-height: 24px; background: #1b2033; color: #e8e8e8; font-family: "Liberation Sans", sans-serif; font-size: 16.500px; white-space: nowrap; }

.legend { width: 229px; flex: none; align-self: flex-start; border: 1px solid #d8d8d8; background: #fafafa; }
.legend-h { height: 44px; line-height: 42px; padding-left: 8px; font-family: Lato, "Open Sans", sans-serif; font-size: 18px; color: #444; }
.legend-list { list-style: none; margin: 0; padding: 0 0 0 5px; height: 242px; background: #000; color: #dcdcdc; font-family: Lato, "Open Sans", sans-serif; font-weight: 300; font-size: 18px; letter-spacing: .5px; }
.legend-list li { height: 30px; display: flex; align-items: center; gap: 6px; }
.sw { width: 21px; height: 21px; }
.c-anert { background: #f28e2b; }
.c-cmrl { background: #e15759; }
.c-maha { background: #76b7b2; }
.c-ndmc { background: #59a14f; }
.c-nkda { background: #edc948; }
.c-noida { background: #b07aa1; }
.c-nranvp { background: #ff9da7; }
.c-sdmc { background: #9c755f; }

.tabbar { height: 43px; flex: none; display: flex; background: #e6e6e6; border-top: 2px solid #d6d6d6; font-size: 17.600px; color: #555; white-space: nowrap; }
.tab { display: flex; align-items: center; padding: 0 0 2px 10px; border-right: 2px solid #d6d6d6; }
.ds { width: 196px; gap: 8px; padding-left: 15px; border-right-width: 3px; font-size: 18px; }
.t1 { width: 300px; border-right: none; }
.t2 { width: 299px; font-weight: 700; font-size: 17.800px; color: #444; background: #fafafa; border-right: none; padding-left: 9px; }
.t3 { width: 234px; }
.t4 { width: 284px; }
.t5 { width: 280px; }
.t6 { width: 183px; }
.ticon { width: 47.500px; padding-left: 12px; }
.ticon:last-child { border-right: none; }
```
